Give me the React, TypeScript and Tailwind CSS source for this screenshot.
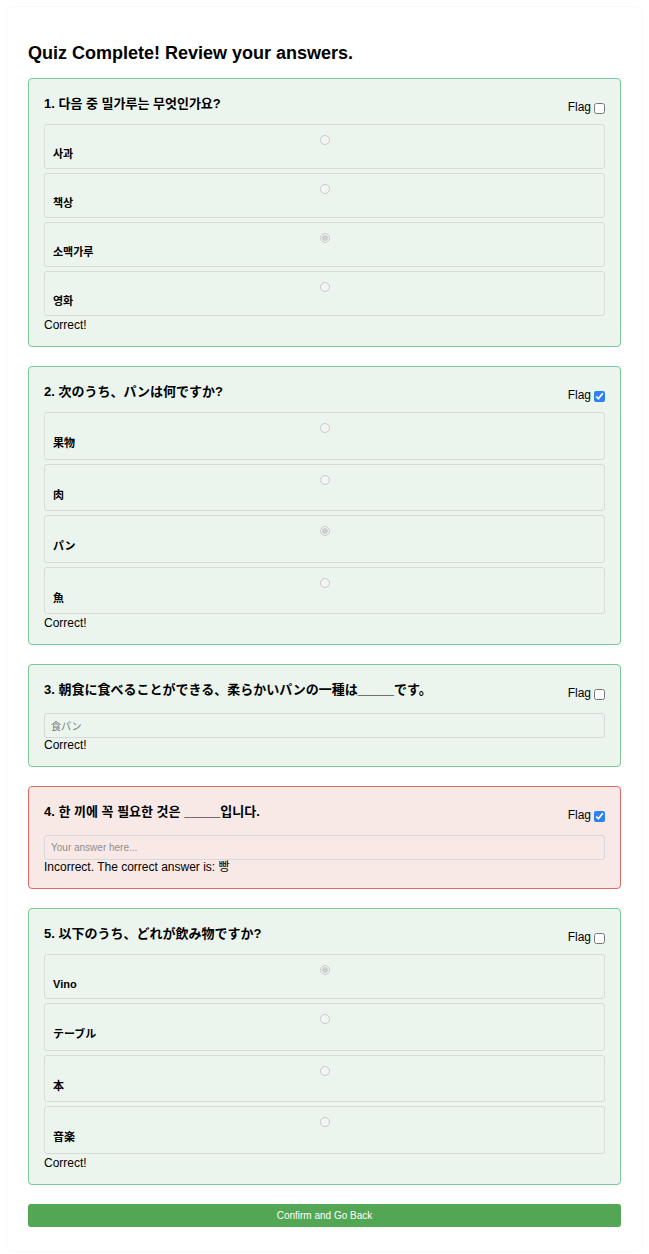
import React from "react"

type Question = {
  text: string
  kind: "choice" | "fill"
  options?: string[]
  selected?: number
  value?: string
  flagged: boolean
  correct: boolean
  answer?: string
}

const questions: Question[] = [
  {
    text: "1. 다음 중 밀가루는 무엇인가요?",
    kind: "choice",
    options: ["사과", "책상", "소맥가루", "영화"],
    selected: 2,
    flagged: false,
    correct: true,
  },
  {
    text: "2. 次のうち、パンは何ですか?",
    kind: "choice",
    options: ["果物", "肉", "パン", "魚"],
    selected: 2,
    flagged: true,
    correct: true,
  },
  {
    text: "3. 朝食に食べることができる、柔らかいパンの一種は_____です。",
    kind: "fill",
    value: "食パン",
    flagged: false,
    correct: true,
  },
  {
    text: "4. 한 끼에 꼭 필요한 것은 _____입니다.",
    kind: "fill",
    value: "",
    flagged: true,
    correct: false,
    answer: "빵",
  },
  {
    text: "5. 以下のうち、どれが飲み物ですか?",
    kind: "choice",
    options: ["Vino", "テーブル", "本", "音楽"],
    selected: 0,
    flagged: false,
    correct: true,
  },
]

const isJapanese = (s: string) => /[\u3040-\u30ff\u4e00-\u9fff]/.test(s)

function QuestionCard({ q, index }: { q: Question; index: number }) {
  return (
    <div
      className={
        q.correct
          ? "rounded-[4px] border border-[#7cc896] bg-[#ebf5ee] px-[15px] pt-[17px] pb-[14px]"
          : "rounded-[4px] border border-[#e2695f] bg-[#f8e8e6] px-[15px] pt-[17px] pb-[14px]"
      }
    >
      <div className="flex h-4 items-start justify-between">
        <h3 className="text-[13px] font-bold leading-4 text-black">{q.text}</h3>
        <label className="mt-[4px] flex h-[14px] items-center text-[12px] leading-[14px] text-black">
          Flag
          <input
            type="checkbox"
            defaultChecked={q.flagged}
            className="ml-[3px] mt-[3px] h-[11px] w-[11px] accent-[#2f7ff5]"
          />
        </label>
      </div>

      {q.kind === "choice" ? (
        <div className="mt-3 flex flex-col gap-1">
          {q.options!.map((opt, i) => (
            <div
              key={i}
              className="flex flex-col rounded-[3px] border border-[#d6dbd7] px-2 pt-[10px] pb-[7px]"
            >
              <input
                type="radio"
                name={`q${index}`}
                disabled
                defaultChecked={q.selected === i}
                className="mx-auto m-0 h-[10px] w-[10px]"
              />
              <span
                className={
                  isJapanese(opt)
                    ? "mt-[2px] text-[11px] font-bold leading-[16.5px] text-black"
                    : "mt-[2px] text-[11px] font-bold leading-[14px] text-black"
                }
              >
                {opt}
              </span>
            </div>
          ))}
        </div>
      ) : (
        <input
          type="text"
          disabled
          defaultValue={q.value}
          placeholder="Your answer here..."
          className="mt-[15px] block h-[25px] w-full rounded-[3px] border border-[#d6d9d7] bg-transparent px-[6px] text-[10px] text-[#777] placeholder:text-[#8e8e8e]"
        />
      )}

      <p className={q.kind === "choice" ? "mt-[2px] text-[12px] leading-[14px] text-black" : "text-[12px] leading-[14px] text-black"}>
        {q.correct ? "Correct!" : `Incorrect. The correct answer is: ${q.answer}`}
      </p>
    </div>
  )
}

export default function App() {
  return (
    <div
      className="min-h-screen bg-white p-[6px]"
      style={{ fontFamily: '"Liberation Sans", Arial, "Noto Sans CJK KR", "Noto Sans CJK JP", sans-serif' }}
    >
      <div className="min-h-[1242px] rounded-[6px] border border-[#fafafa] px-[21px] pt-[35px] pb-6">
        <h1 className="mb-[14px] text-[18px] font-bold leading-[22px] text-black">
          Quiz Complete! Review your answers.
        </h1>
        <div className="flex flex-col gap-[19px]">
          {questions.map((q, i) => (
            <QuestionCard key={i} q={q} index={i} />
          ))}
          <button
            type="button"
            className="h-[23px] w-full rounded-[3px] bg-[#53a653] text-[10px] text-white"
          >
            Confirm and Go Back
          </button>
        </div>
      </div>
    </div>
  )
}
